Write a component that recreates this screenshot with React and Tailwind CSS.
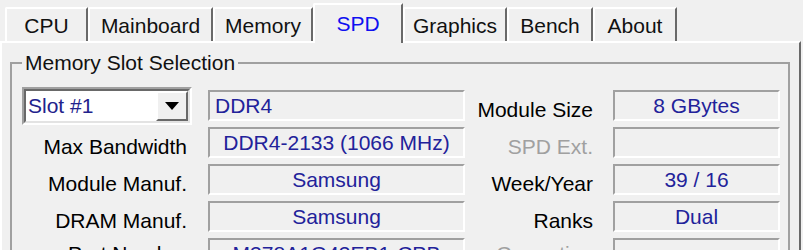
const tabs = [
  { name: "CPU", w: "w-[83px]" },
  { name: "Mainboard", w: "w-[125px]" },
  { name: "Memory", w: "w-[100px]" },
  { name: "SPD", w: "w-[90px]", active: true },
  { name: "Graphics", w: "w-[104px]" },
  { name: "Bench", w: "w-[86px]" },
  { name: "About", w: "w-[84px]" },
];

function Field({ children, w, left }) {
  return (
    <div
      className={`${w} h-[31px] shrink-0 border-2 border-t-[#a0a0a0] border-l-[#a0a0a0] border-b-white border-r-white flex items-center ${
        left ? "justify-start pl-[5px]" : "justify-center"
      } text-[#22229a] whitespace-nowrap overflow-hidden`}
    >
      {children}
    </div>
  );
}

function Label({ children, gray, w, pr, last }) {
  return (
    <div
      className={`${w} ${pr} ${last ? "pt-0" : "pt-[8px]"} shrink-0 text-right whitespace-nowrap ${
        gray ? "text-[#a0a0a0]" : "text-black"
      }`}
    >
      {children}
    </div>
  );
}

function Row({ label, value, rlabel, rvalue, rgray, lgray, first, last }) {
  return (
    <div className="flex items-center h-[31px]">
      {first ? (
        <div className="w-[196px] shrink-0 flex items-center">
          <div className="ml-[10px] w-[170px] h-[38px] border-2 border-t-[#a0a0a0] border-l-[#a0a0a0] border-b-white border-r-white">
            <div className="w-full h-full border-2 border-t-[#696969] border-l-[#696969] border-b-[#e3e3e3] border-r-[#e3e3e3] bg-white flex items-center">
              <div className="flex-1 pl-[2px] text-[#22228c]">Slot #1</div>
              <div className="w-[32px] h-full border-2 border-t-white border-l-white border-b-[#696969] border-r-[#696969] bg-[#f0f0f0] flex items-center justify-center">
                <div className="w-0 h-0 border-l-[7px] border-r-[7px] border-t-[8px] border-l-transparent border-r-transparent border-t-black" />
              </div>
            </div>
          </div>
        </div>
      ) : (
        <Label w="w-[196px]" pr="pr-[21px]" gray={lgray} last={last}>
          {label}
        </Label>
      )}
      <Field w="w-[257px]" left={first}>
        {value}
      </Field>
      <Label w="w-[148px]" pr="pr-[20px]" gray={rgray} last={last}>
        {rlabel}
      </Label>
      <Field w="w-[167px]">{rvalue}</Field>
    </div>
  );
}

export default function App() {
  return (
    <div className="w-[803px] h-[250px] overflow-hidden bg-[#f0f0f0] font-['Liberation_Sans',Arial,sans-serif] text-[21px] leading-[23px] text-black">
      <div className="flex items-end h-[41px] pl-[5px]">
        {tabs.map((t) =>
          t.active ? (
            <div
              key={t.name}
              className={`${t.w} h-[40px] -mb-[2px] relative z-10 bg-[#f0f0f0] border-t-2 border-l-2 border-r-2 border-t-white border-l-white border-r-[#696969] rounded-tl-[2px] flex items-center justify-center pb-[2px] text-[#1010f0]`}
            >
              {t.name}
            </div>
          ) : (
            <div
              key={t.name}
              className={`${t.w} h-[34px] bg-[#f0f0f0] border-t-2 border-l-2 border-r-2 border-t-white border-l-white border-r-[#696969] rounded-tl-[2px] flex items-center justify-center text-[#111]`}
            >
              {t.name}
            </div>
          )
        )}
      </div>
      <div className="w-[801px] h-[209px] border-t-2 border-l-2 border-r-2 border-t-white border-l-white border-r-[#696969]">
        <fieldset className="ml-[8px] mt-[8px] w-[780px] h-[400px] border-2 border-[#a0a0a0]">
          <legend className="ml-[10px] px-[3px] text-[#111]">Memory Slot Selection</legend>
          <div className="mt-[16px] flex flex-col gap-[6px]">
            <Row first value="DDR4" rlabel="Module Size" rvalue="8 GBytes" />
            <Row label="Max Bandwidth" value="DDR4-2133 (1066 MHz)" rlabel="SPD Ext." rgray rvalue="" />
            <Row label="Module Manuf." value="Samsung" rlabel="Week/Year" rvalue="39 / 16" />
            <Row label="DRAM Manuf." value="Samsung" rlabel="Ranks" rvalue="Dual" />
            <Row last label="Part Number" value="M378A1G43EB1-CPB" rlabel="Correction" rgray rvalue="" />
          </div>
        </fieldset>
      </div>
    </div>
  );
}
